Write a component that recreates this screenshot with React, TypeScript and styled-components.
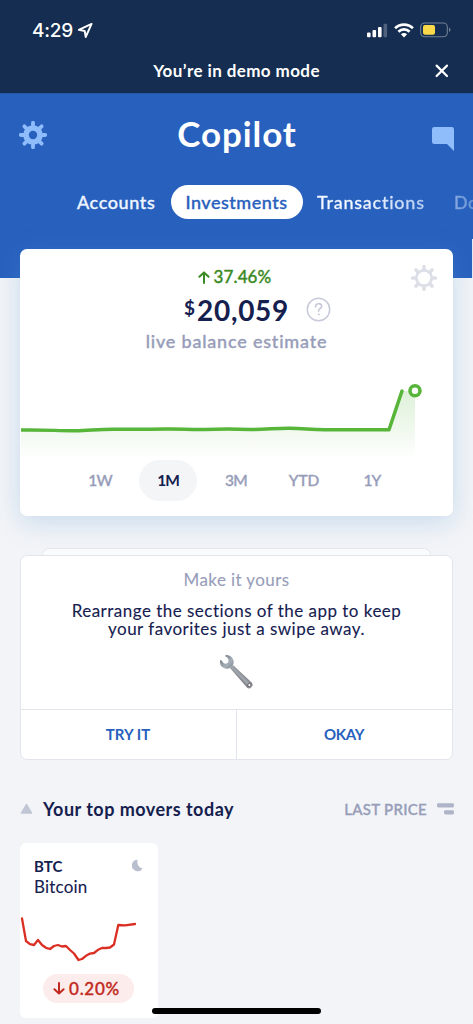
import React from "react";
import styled, { createGlobalStyle } from "styled-components";

const GlobalStyle = createGlobalStyle`
  * { box-sizing: border-box; }
  body { margin: 0; background: #f2f4f7; font-family: Lato, "Open Sans", sans-serif; }
  button { font: inherit; border: 0; background: none; padding: 0; margin: 0; color: inherit; display: block; }
  svg { display: block; flex: none; }
`;

interface TextProps {
  $size: number;
  $weight?: number;
  $color?: string;
  $track?: number;
  $line?: number;
  $stroke?: number;
}

/* Lato ships no medium cut, so medium text is a regular with a hairline stroke. */
const Text = styled.span<TextProps>`
  display: block;
  white-space: nowrap;
  font-size: ${(p) => p.$size}px;
  font-weight: ${(p) => p.$weight ?? 500};
  color: ${(p) => p.$color ?? "inherit"};
  letter-spacing: ${(p) => p.$track ?? 0}px;
  line-height: ${(p) => p.$line ?? 20}px;
  -webkit-text-stroke: ${(p) => p.$stroke ?? (p.$weight ? 0 : 0.35)}px currentColor;
`;

const Clock = styled(Text)`
  width: 45px;
  padding-top: 1px;
  font-family: Inter, sans-serif;
`;

const Screen = styled.main`
  position: relative;
  width: 473px;
  height: 1024px;
  overflow: hidden;
  background: #f2f4f7;
`;

const TopArea = styled.div`
  height: 93px;
  background: #142d50;
  color: #fff;
`;

const StatusBar = styled.div`
  display: flex;
  align-items: center;
  height: 60px;
  padding: 0 22px 0 32px;
`;

const StatusIcons = styled.div`
  display: flex;
  align-items: center;
  gap: 6px;
  margin-left: auto;
`;

const DemoBar = styled.div`
  display: grid;
  grid-template-columns: 1fr auto 1fr;
  align-items: center;
  height: 22px;
  padding: 0 24px;
`;

const CloseButton = styled.button`
  justify-self: end;
`;

const Header = styled.header`
  height: 185px;
  background: #2860be;
  border-top: 1px solid #2357a8;
  color: #fff;
`;

const HeaderRow = styled.div`
  display: grid;
  grid-template-columns: 1fr auto 1fr;
  align-items: center;
  height: 82px;
  padding: 0 18px 0 19px;
`;

const Brand = styled.h1`
  margin: 0;
  padding-bottom: 4px;
`;

const ChatButton = styled.button`
  justify-self: end;
  padding-top: 8px;
`;

const Tabs = styled.nav`
  display: flex;
  align-items: center;
  height: 34px;
  margin-top: 9px;
  padding-left: 77px;
`;

const Tab = styled.button<{ $width: number; $gap?: number }>`
  flex: none;
  width: ${(p) => p.$width}px;
  padding-bottom: 1px;
  margin-left: ${(p) => p.$gap ?? 0}px;
  color: #eef5ff;
  text-align: left;
`;

const FadedTab = styled(Tab)<{ $fade: string }>`
  color: transparent;
  background: ${(p) => p.$fade};
  background-clip: text;
`;

const ActiveTab = styled.button`
  display: flex;
  align-items: center;
  justify-content: center;
  flex: none;
  width: 132px;
  height: 34px;
  padding: 0 1px 1px 0;
  margin-left: 14px;
  border-radius: 17px;
  background: #fff;
  color: #2860be;
`;

const CardStrip = styled.section`
  display: flex;
  gap: 19px;
  margin-top: -29px;
  padding-left: 20px;
`;

const BalanceCard = styled.article`
  position: relative;
  flex: none;
  width: 433px;
  height: 267px;
  padding-top: 18px;
  border-radius: 7px;
  background: #fff;
  box-shadow: 0 6px 26px rgba(93, 153, 217, 0.28);
`;

const NextCard = styled.div`
  flex: none;
  width: 20px;
  height: 39px;
  margin-top: -10px;
  background: #e4eaf4;
`;

const Change = styled.div`
  display: flex;
  align-items: center;
  justify-content: center;
  gap: 4px;
  height: 20px;
  padding-right: 4px;
  color: #3c8a24;
`;

const Amount = styled.div`
  display: flex;
  align-items: flex-start;
  gap: 2px;
  height: 44px;
  padding: 8px 0 0 164px;
  color: #15204f;
`;

const Help = styled.button`
  margin-left: 15px;
  padding-top: 2px;
`;

const Centered = styled.div`
  display: flex;
  justify-content: center;
  height: 30px;
`;

const CardSettings = styled.button`
  position: absolute;
  top: 16px;
  right: 16px;
`;

const Ranges = styled.div`
  display: flex;
  gap: 10px;
  height: 41px;
  margin-top: -1px;
  padding-left: 51px;
`;

const Range = styled.button<{ $active?: boolean }>`
  display: flex;
  align-items: center;
  justify-content: center;
  width: 58px;
  height: 41px;
  padding-bottom: 2px;
  border-radius: 21px;
  background: ${(p) => (p.$active ? "#f3f5f6" : "none")};
  color: ${(p) => (p.$active ? "#15204f" : "#979db9")};
`;

const PromoBack = styled.div`
  width: 389px;
  height: 7px;
  margin: 32px auto 0 42px;
  border: 1px solid #e6e8ef;
  border-bottom: 0;
  border-radius: 7px 7px 0 0;
  background: #fafbfc;
`;

const Promo = styled.section`
  width: 433px;
  height: 205px;
  margin-left: 20px;
  border: 1px solid #e3e5ed;
  border-radius: 7px;
  background: #fff;
`;

const PromoBody = styled.div`
  display: flex;
  flex-direction: column;
  align-items: center;
  height: 153px;
  padding-top: 14px;
`;

const PromoText = styled.div`
  margin: 12px 0 17px;
  text-align: center;
`;

const PromoActions = styled.div`
  display: grid;
  grid-template-columns: 215px 1fr;
  height: 50px;
  border-top: 1px solid #e3e5ed;
`;

const PromoAction = styled.button`
  display: flex;
  align-items: center;
  justify-content: center;
  padding: 0 1px 1px 0;
  color: #2860be;
  & + & { border-left: 1px solid #e3e5ed; }
`;

const SectionHeader = styled.div`
  display: flex;
  align-items: center;
  height: 24px;
  margin-top: 37px;
  padding: 0 19px 0 20px;
`;

const SectionTitle = styled.h2`
  margin: 0 0 0 10px;
`;

const Sort = styled.div`
  display: flex;
  align-items: center;
  gap: 10px;
  margin-left: auto;
  color: #979db9;
`;

const Mover = styled.article`
  width: 138px;
  height: 175px;
  margin: 22px 0 0 20px;
  padding-top: 13px;
  border-radius: 6px;
  background: #fff;
  color: #15204f;
`;

const MoverHead = styled.div`
  display: flex;
  justify-content: space-between;
  height: 21px;
  padding: 0 15px 0 14px;
`;

const MoonSlot = styled.span`
  padding-top: 3px;
`;

const MoverName = styled.div`
  height: 25px;
  padding: 0 14px;
`;

const Loss = styled.div`
  display: flex;
  align-items: center;
  justify-content: center;
  gap: 4px;
  width: 91px;
  height: 29px;
  padding: 0 4px 0 0;
  margin: 7px 0 0 23px;
  border-radius: 15px;
  background: #fceceb;
  color: #c12a20;
`;

const HomeIndicator = styled.div`
  position: absolute;
  left: 152px;
  bottom: 10px;
  width: 169px;
  height: 6px;
  border-radius: 3px;
  background: #000;
`;

const Gear = ({ size, color, hole, body }: { size: number; color: string; hole: number; body: number }) => {
  const mid = (body + hole) / 2;
  return (
    <svg width={size} height={size} viewBox="-14 -14 28 28" fill="none" stroke={color}>
      <circle r={mid} strokeWidth={body - hole} />
      {[0, 45, 90, 135, 180, 225, 270, 315].map((a) => (
        <path key={a} d={`M0 ${-body + 0.5}V-12.2`} strokeWidth="3.8" strokeLinecap="round" transform={`rotate(${a})`} />
      ))}
    </svg>
  );
};

const LocationArrow = () => (
  <svg width="17" height="17" viewBox="0 0 17 17" fill="none" stroke="#fff" strokeWidth="1.9" strokeLinejoin="round">
    <path d="M14.6 1.9 1.8 7.9 7.7 9 8.7 15Z" />
  </svg>
);

const Signal = () => (
  <svg width="22" height="15" viewBox="0 0 22 15" fill="#fff">
    <rect x="1" y="9.5" width="3.6" height="4.8" rx="1" />
    <rect x="6.5" y="7" width="3.6" height="7.3" rx="1" />
    <rect x="12" y="4" width="3.6" height="10.3" rx="1" />
    <rect x="17.5" y="0.7" width="3.6" height="13.6" rx="1" opacity="0.25" />
  </svg>
);

const Wifi = () => (
  <svg width="20" height="15" viewBox="0 0 20 15" fill="none" stroke="#fff" strokeWidth="2.7">
    <path d="M1.1 5.2a12.8 12.8 0 0 1 17.8 0" />
    <path d="M4.4 8.7a8 8 0 0 1 11.2 0" />
    <path d="M10 14.4 6.9 11.3a4.4 4.4 0 0 1 6.2 0Z" fill="#fff" stroke="none" />
  </svg>
);

const Battery = () => (
  <svg width="31" height="16" viewBox="0 0 31 16" fill="none">
    <rect x="0.7" y="1" width="26.6" height="13.7" rx="4" stroke="#728096" strokeWidth="1.1" />
    <rect x="3" y="3.1" width="12" height="9.7" rx="2" fill="#f9d849" />
    <path d="M29 5.8c2 .7 2 3.5 0 4.2Z" fill="#728096" />
  </svg>
);

const Close = () => (
  <svg width="14" height="14" viewBox="0 0 14 14" stroke="#fff" strokeWidth="2.2" strokeLinecap="round">
    <path d="M1.6 1.6 12 12M12 1.6 1.6 12" />
  </svg>
);

const Chat = () => (
  <svg width="24" height="26" viewBox="0 0 24 26" fill="#8fbcfa">
    <path d="M3.2 1h17.6A2.2 2.2 0 0 1 23 3.2V25L16 18H3.2A2.2 2.2 0 0 1 1 15.8V3.2A2.2 2.2 0 0 1 3.2 1Z" />
  </svg>
);

const Arrow = ({ down }: { down?: boolean }) => (
  <svg width="12" height="13" viewBox="0 0 12 13" fill="none" stroke="currentColor" strokeWidth="2" strokeLinecap="round" strokeLinejoin="round">
    <path d={down ? "M6 1v10.5M1.4 7.3 6 11.6l4.6-4.3" : "M6 12V1.5M1.4 5.7 6 1.4l4.6 4.3"} />
  </svg>
);

const HelpIcon = () => (
  <svg width="25" height="25" viewBox="0 0 25 25" fill="none" stroke="#c8cad9" strokeLinecap="round">
    <circle cx="12.5" cy="12.5" r="11.2" strokeWidth="1.5" />
    <path d="M9.5 9.8c0-4 6.2-4 6.2-.6 0 2.6-3.1 2-3.1 4.8" strokeWidth="1.7" />
    <circle cx="12.6" cy="17.3" r="0.5" strokeWidth="1" fill="#c8cad9" />
  </svg>
);

const BalanceChart = () => (
  <svg width="433" height="100" viewBox="20 361 433 100" fill="none">
    <defs>
      <linearGradient id="balanceFill" gradientUnits="userSpaceOnUse" x1="0" y1="390" x2="0" y2="459">
        <stop offset="0" stopColor="#55b53a" stopOpacity="0.2" />
        <stop offset="1" stopColor="#55b53a" stopOpacity="0" />
      </linearGradient>
    </defs>
    <path d="M21 430H389L402 391H415V460H21Z" fill="url(#balanceFill)" />
    <path
      d="M21 430C45 429.5 60 431 75 430.7S100 429 115 429.2 150 429.4 165 429 190 429.8 205 429.4 235 429 250 429.4 275 428 290 428.2 310 429.7 325 429.7H389L402 391"
      stroke="#57b53a"
      strokeWidth="3.5"
      strokeLinejoin="round"
    />
    <circle cx="402" cy="391" r="1.7" fill="#57b53a" />
    <circle cx="415" cy="390.7" r="5" stroke="#57b53a" strokeWidth="3.6" fill="#fff" />
  </svg>
);

const Wrench = () => (
  <svg width="36" height="36" viewBox="0 0 36 36">
    <defs>
      <linearGradient id="steel" x1="0.35" y1="0.65" x2="0.65" y2="0.35">
        <stop offset="0" stopColor="#625d61" />
        <stop offset="0.5" stopColor="#a4abb3" />
        <stop offset="1" stopColor="#6f6c72" />
      </linearGradient>
      <linearGradient id="jaw" x1="0" y1="0" x2="1" y2="1">
        <stop offset="0" stopColor="#5f6c76" />
        <stop offset="0.6" stopColor="#a6b0b9" />
        <stop offset="1" stopColor="#7d848c" />
      </linearGradient>
    </defs>
    <path d="M11 14 14.2 11.2 32.6 28.6C35.4 31.6 31.8 36 28.2 33.8Z" fill="url(#steel)" />
    <path
      d="M1 6.6C.4 11.8 4.2 15.3 8.7 14.7 13.2 13.9 15.4 10 14.5 6.5 13.6 3 10.7.8 6.7.9L6.2 2.3C8.9 3.6 10 5.5 9.4 7.5 8.7 9.8 6.2 10.3 4.5 9.1L2.2 6.1Z"
      fill="url(#jaw)"
    />
    <circle cx="30.4" cy="31" r="1.6" fill="#fff" stroke="#51494c" strokeWidth="0.8" />
  </svg>
);

const Triangle = () => (
  <svg width="13" height="12" viewBox="0 0 13 12" fill="#c1c6d5">
    <path d="M5.7 1.4a1 1 0 0 1 1.6 0l4.8 8c.4.8 0 1.3-.8 1.3H1.7c-.8 0-1.2-.5-.8-1.3Z" />
  </svg>
);

const SortIcon = () => (
  <svg width="17" height="12" viewBox="0 0 17 12" fill="#afb4c9">
    <rect y="0.3" width="17" height="4.2" rx="1.4" />
    <rect x="7" y="7.3" width="10" height="4.2" rx="1.4" />
  </svg>
);

const Moon = () => (
  <svg width="11" height="13" viewBox="0 0 11 13" fill="#b9bfcf">
    <path d="M5.6 .8A5.7 5.7 0 1 0 10.6 9.2C6.9 9.2 4.6 5 5.6 .8Z" />
  </svg>
);

const MoverChart = () => (
  <svg width="138" height="65" viewBox="20 902 138 65" fill="none" stroke="#dc2f24" strokeWidth="2.3" strokeLinejoin="round" strokeLinecap="round">
    <path d="M22 918.5 26 941 30 944.2 34 945 38 940 42 945 46 947.8 50 949 54 946 58 945 62 946.5 66 946 70 950 74 953.5 78.5 960 82 959 86 955.8 90 953.6 94 953 98 949.8 102 948 106 948 110 947.5 114 944.5 118.3 925 125 925.4 135 924" />
  </svg>
);

export default function App() {
  return (
    <Screen>
      <GlobalStyle />
      <TopArea>
        <StatusBar>
          <Clock $size={19} $track={-0.2} $stroke={0}>4:29</Clock>
          <LocationArrow />
          <StatusIcons>
            <Signal />
            <Wifi />
            <Battery />
          </StatusIcons>
        </StatusBar>
        <DemoBar>
          <span />
          <Text $size={17} $weight={700} $track={0.4}>You’re in demo mode</Text>
          <CloseButton aria-label="Close"><Close /></CloseButton>
        </DemoBar>
      </TopArea>

      <Header>
        <HeaderRow>
          <Gear size={28} color="#8fbcfa" hole={4.2} body={9.8} />
          <Brand><Text $size={35} $weight={700} $track={0.9} $line={40}>Copilot</Text></Brand>
          <ChatButton aria-label="Messages"><Chat /></ChatButton>
        </HeaderRow>
        <Tabs>
          <Tab $width={80}><Text $size={18} $track={0.6}>Accounts</Text></Tab>
          <ActiveTab><Text $size={18} $track={0.5}>Investments</Text></ActiveTab>
          <FadedTab $width={109} $gap={14} $fade="linear-gradient(90deg, #f4f8ff 40%, #b3cbf0)">
            <Text $size={18} $track={0.75}>Transactions</Text>
          </FadedTab>
          <FadedTab $width={60} $gap={28} $fade="linear-gradient(90deg, #87a9e0, #6b95d6 30%)">
            <Text $size={18} $track={0.5}>Documents</Text>
          </FadedTab>
        </Tabs>
      </Header>

      <CardStrip>
        <BalanceCard>
          <CardSettings aria-label="Card settings"><Gear size={26} color="#dddfe7" hole={6.8} body={9.8} /></CardSettings>
          <Change>
            <Arrow />
            <Text $size={17} $track={0.1}>37.46%</Text>
          </Change>
          <Amount>
            <Text $size={19} $weight={700} $line={26}>$</Text>
            <Text $size={28} $weight={700} $track={0.7} $line={30}>20,059</Text>
            <Help aria-label="About this estimate"><HelpIcon /></Help>
          </Amount>
          <Centered><Text $size={18} $track={0.8} $color="#979db9">live balance estimate</Text></Centered>
          <BalanceChart />
          <Ranges>
            <Range><Text $size={15.5} $track={-0.9}>1W</Text></Range>
            <Range $active><Text $size={15.5} $weight={700} $track={-1}>1M</Text></Range>
            <Range><Text $size={15.5} $track={-0.6}>3M</Text></Range>
            <Range><Text $size={15.5}>YTD</Text></Range>
            <Range><Text $size={15.5} $track={-0.9}>1Y</Text></Range>
          </Ranges>
        </BalanceCard>
        <NextCard />
      </CardStrip>

      <PromoBack />
      <Promo>
        <PromoBody>
          <Text $size={17} $weight={400} $track={0.4} $stroke={0.1} $color="#979db9">Make it yours</Text>
          <PromoText>
            <Text $size={17} $weight={400} $track={0.48} $stroke={0.1} $color="#15204f" $line={17.5}>
              Rearrange the sections of the app to keep
              <br />
              your favorites just a swipe away.
            </Text>
          </PromoText>
          <Wrench />
        </PromoBody>
        <PromoActions>
          <PromoAction><Text $size={15} $weight={700}>TRY IT</Text></PromoAction>
          <PromoAction><Text $size={15} $weight={700} $track={-0.3}>OKAY</Text></PromoAction>
        </PromoActions>
      </Promo>

      <SectionHeader>
        <Triangle />
        <SectionTitle><Text $size={18} $weight={700} $track={0.48} $color="#15204f">Your top movers today</Text></SectionTitle>
        <Sort>
          <Text $size={15} $track={0.3}>LAST PRICE</Text>
          <SortIcon />
        </Sort>
      </SectionHeader>

      <Mover>
        <MoverHead>
          <Text $size={15} $weight={700}>BTC</Text>
          <MoonSlot><Moon /></MoonSlot>
        </MoverHead>
        <MoverName><Text $size={17} $weight={400} $track={0.2} $stroke={0.1}>Bitcoin</Text></MoverName>
        <MoverChart />
        <Loss>
          <Arrow down />
          <Text $size={17} $track={0.7}>0.20%</Text>
        </Loss>
      </Mover>
      <HomeIndicator />
    </Screen>
  );
}
